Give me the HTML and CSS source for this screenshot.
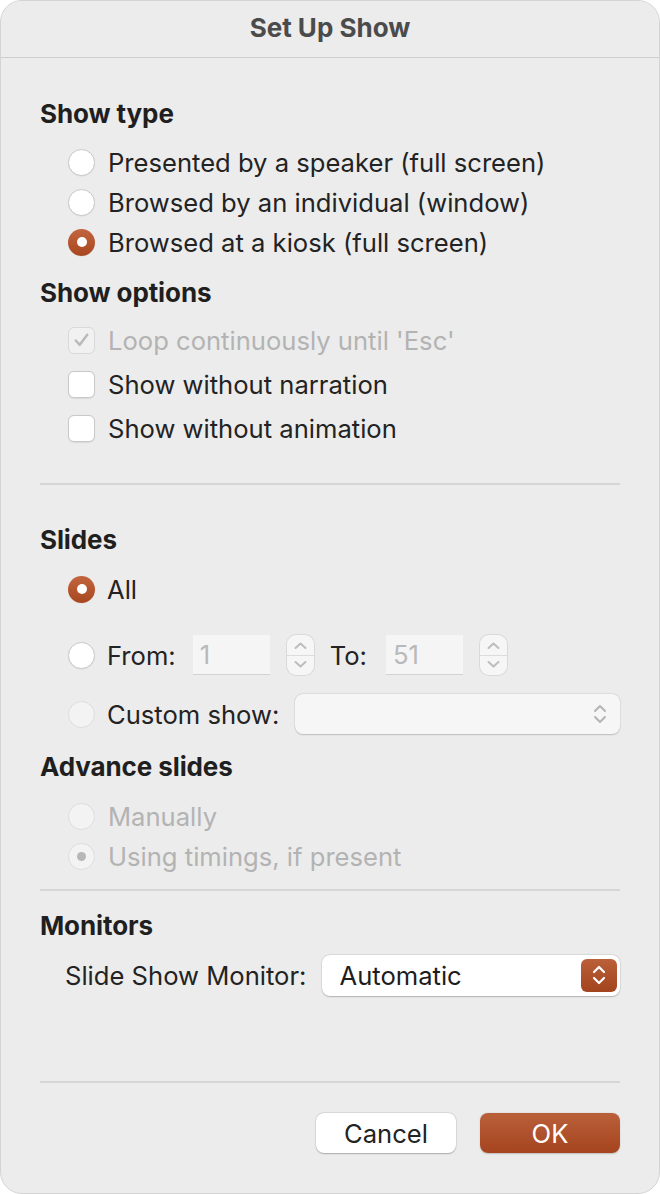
FILE: index.html
```html
<!DOCTYPE html>
<html>
<head>
<meta charset="utf-8">
<link rel="stylesheet" href="styles.css">
</head>
<body>
<div class="window">
  <div class="titlebar">Set Up Show</div>
  <div class="content">
    <div class="heading h-showtype">Show type</div>
    <div class="group g-showtype">
      <div class="row r40"><span class="radio"></span><span class="label">Presented by a speaker (full screen)</span></div>
      <div class="row r40"><span class="radio"></span><span class="label">Browsed by an individual (window)</span></div>
      <div class="row r40"><span class="radio on"></span><span class="label">Browsed at a kiosk (full screen)</span></div>
    </div>
    <div class="heading h-options">Show options</div>
    <div class="group g-options">
      <div class="row r44 disabled"><span class="check checked"><svg viewBox="0 0 26 26" width="26" height="26"><path d="M7 13.5 L11.2 18 L19 7.5" fill="none" stroke="#b9b9b9" stroke-width="2.6" stroke-linecap="round" stroke-linejoin="round"/></svg></span><span class="label">Loop continuously until 'Esc'</span></div>
      <div class="row r44"><span class="check"></span><span class="label">Show without narration</span></div>
      <div class="row r44"><span class="check"></span><span class="label">Show without animation</span></div>
    </div>
    <div class="divider d1"></div>
    <div class="heading h-slides">Slides</div>
    <div class="group g-slides">
      <div class="row r40"><span class="radio on"></span><span class="label lbl-tight">All</span></div>
      <div class="row r44 from-row">
        <span class="radio"></span><span class="label lbl-tight">From:</span>
        <span class="field f-from">1</span>
        <span class="stepper st-from"><svg viewBox="0 0 27 40" width="27" height="40"><path d="M8.5 13 L13.5 8.5 L18.5 13" fill="none" stroke="#bdbdbd" stroke-width="2" stroke-linecap="round" stroke-linejoin="round"/><path d="M8.5 27 L13.5 31.5 L18.5 27" fill="none" stroke="#bdbdbd" stroke-width="2" stroke-linecap="round" stroke-linejoin="round"/></svg></span>
        <span class="label to-label">To:</span>
        <span class="field f-to">51</span>
        <span class="stepper st-to"><svg viewBox="0 0 27 40" width="27" height="40"><path d="M8.5 13 L13.5 8.5 L18.5 13" fill="none" stroke="#bdbdbd" stroke-width="2" stroke-linecap="round" stroke-linejoin="round"/><path d="M8.5 27 L13.5 31.5 L18.5 27" fill="none" stroke="#bdbdbd" stroke-width="2" stroke-linecap="round" stroke-linejoin="round"/></svg></span>
      </div>
      <div class="row r40 custom-row">
        <span class="radio dis"></span><span class="label lbl-tight">Custom show:</span>
        <span class="popup"><svg viewBox="0 0 20 30" width="20" height="30"><path d="M5 12 L10 7 L15 12" fill="none" stroke="#b5b5b5" stroke-width="2" stroke-linecap="round" stroke-linejoin="round"/><path d="M5 18 L10 23 L15 18" fill="none" stroke="#b5b5b5" stroke-width="2" stroke-linecap="round" stroke-linejoin="round"/></svg></span>
      </div>
    </div>
    <div class="heading h-advance">Advance slides</div>
    <div class="group g-advance">
      <div class="row r40 disabled"><span class="radio dis"></span><span class="label">Manually</span></div>
      <div class="row r40 disabled"><span class="radio dis dot"></span><span class="label">Using timings, if present</span></div>
    </div>
    <div class="divider d2"></div>
    <div class="heading h-monitors">Monitors</div>
    <div class="monitor-row">
      <span class="label mon-label">Slide Show Monitor:</span>
      <span class="monitor-select"><span class="mon-value">Automatic</span><span class="mon-btn"><svg viewBox="0 0 36 32" width="36" height="32"><path d="M13 13 L18 8 L23 13" fill="none" stroke="#fff" stroke-width="2.2" stroke-linecap="round" stroke-linejoin="round"/><path d="M13 19 L18 24 L23 19" fill="none" stroke="#fff" stroke-width="2.2" stroke-linecap="round" stroke-linejoin="round"/></svg></span></span>
    </div>
    <div class="divider d3"></div>
    <div class="buttons">
      <button class="btn cancel">Cancel</button>
      <button class="btn ok">OK</button>
    </div>
  </div>
</div>
</body>
</html>
```

FILE: styles.css
```css
* { box-sizing: border-box; }
html, body { margin: 0; padding: 0; background: #ffffff; }
body { font-family: "Inter", "Liberation Sans", sans-serif; color: #232323; }

.window {
  width: 660px;
  height: 1194px;
  background: #ececec;
  border: 1px solid #d4d4d4;
  border-radius: 22px;
  overflow: hidden;
}
.titlebar {
  height: 57px;
  border-bottom: 1px solid #cdcdcd;
  background: #ececec;
  display: flex;
  align-items: center;
  justify-content: center;
  font-size: 26px;
  font-weight: 700;
  color: #4b4b4b;
  padding-bottom: 3px;
}
.content { padding: 0 39px 0 39px; }

.heading {
  height: 32px;
  line-height: 32px;
  font-size: 26px;
  font-weight: 700;
  color: #1f1f1f;
  letter-spacing: -0.1px;
}
.h-showtype { margin-top: 40px; }
.g-showtype { margin-top: 12px; }
.h-options { margin-top: 15px; }
.g-options { margin-top: 9px; }
.d1 { margin-top: 33px; }
.h-slides { margin-top: 39px; }
.g-slides { margin-top: 13px; }
.h-advance { margin-top: 17px; }
.g-advance { margin-top: 13px; }
.d2 { margin-top: 13px; }
.h-monitors { margin-top: 19px; }
.d3 { margin-top: 85px; }

.divider { height: 2px; background: #d6d6d6; }

.group { padding-left: 28px; }
.row { display: flex; align-items: center; }
.r40 { height: 40px; }
.r44 { height: 44px; }
.label { font-size: 25.6px; margin-left: 13px; white-space: nowrap; }
.lbl-tight { margin-left: 12px; }
.disabled .label { color: #b3b3b3; }

.radio {
  width: 27px; height: 27px; flex: none;
  border-radius: 50%;
  background: #ffffff;
  border: 1px solid #c9c9c9;
  box-shadow: 0 0.5px 1px rgba(0,0,0,0.08);
  position: relative;
}
.radio.on {
  border: none;
  background: linear-gradient(#c2653e, #a8471f);
}
.radio.on::after {
  content: "";
  position: absolute;
  left: 8.5px; top: 8.5px;
  width: 10px; height: 10px;
  border-radius: 50%;
  background: #ffffff;
}
.radio.dis { background: #f3f3f3; border-color: #dddddd; box-shadow: none; }
.radio.dot::after {
  content: "";
  position: absolute;
  left: 8px; top: 8px;
  width: 9px; height: 9px;
  border-radius: 50%;
  background: #b7b7b7;
}

.check {
  width: 27px; height: 27px; flex: none;
  border-radius: 6px;
  background: #ffffff;
  border: 1px solid #c9c9c9;
  box-shadow: 0 0.5px 1px rgba(0,0,0,0.08);
  display: flex; align-items: center; justify-content: center;
}
.check svg { display: block; }
.check.checked { background: #f1f1f1; border-color: #d9d9d9; box-shadow: none; }

.from-row { margin-top: 24px; }
.field {
  height: 40px;
  background: #f5f5f5;
  border-bottom: 1px solid #d2d2d2;
  color: #b9b9b9;
  font-size: 25.6px;
  line-height: 40px;
  padding-left: 7px;
  flex: none;
}
.f-from { width: 77px; margin-left: 17px; }
.f-to { width: 77px; margin-left: 19px; }
.stepper {
  width: 27px; height: 40px; flex: none;
  border-radius: 9px;
  background: #f6f6f6;
  box-shadow: 0 0 0 1px #dadada;
  position: relative;
  margin-left: 17px;
}
.stepper::after {
  content: ""; position: absolute; left: 0; right: 0; top: 19.5px; height: 1px; background: #dcdcdc;
}
.stepper svg { display: block; }
.to-label { margin-left: 16px; }
.custom-row { margin-top: 17px; }
.popup {
  margin-left: 16px;
  flex: 1;
  height: 40px;
  border-radius: 8px;
  background: #f6f6f6;
  box-shadow: 0 0.5px 1.5px rgba(0,0,0,0.18), 0 0 0 0.5px rgba(0,0,0,0.06);
  display: flex; align-items: center; justify-content: flex-end;
  padding-right: 10px;
}
.popup svg { display: block; }

.monitor-row {
  display: flex; align-items: center;
  height: 42px;
  margin-top: 12px;
  padding-left: 25px;
}
.mon-label { margin-left: 0; }
.monitor-select {
  margin-left: 16px;
  flex: 1;
  height: 41px;
  border-radius: 8px;
  background: #ffffff;
  box-shadow: 0 0.5px 1.5px rgba(0,0,0,0.22), 0 0 0 0.5px rgba(0,0,0,0.08);
  display: flex; align-items: center; justify-content: space-between;
  padding-left: 17px; padding-right: 3px;
}
.mon-value { font-size: 25.6px; color: #1d1d1d; }
.mon-btn {
  width: 36px; height: 33px;
  border-radius: 6px;
  background: linear-gradient(#bb603a, #a2441d);
  display: flex; align-items: center; justify-content: center;
}
.mon-btn svg { display: block; }

.buttons {
  display: flex; justify-content: flex-end; gap: 24px;
  margin-top: 30px;
}
.btn {
  width: 140px; height: 40px;
  border: none; border-radius: 8px;
  font-family: "Inter", "Liberation Sans", sans-serif;
  font-size: 25.6px;
  padding: 0;
}
.cancel {
  background: #ffffff; color: #232323;
  box-shadow: 0 0.5px 1.5px rgba(0,0,0,0.25), 0 0 0 0.5px rgba(0,0,0,0.08);
}
.ok {
  background: linear-gradient(#b9603b, #a5441e);
  color: #ffffff;
  box-shadow: 0 0.5px 1.5px rgba(0,0,0,0.2);
}
```
